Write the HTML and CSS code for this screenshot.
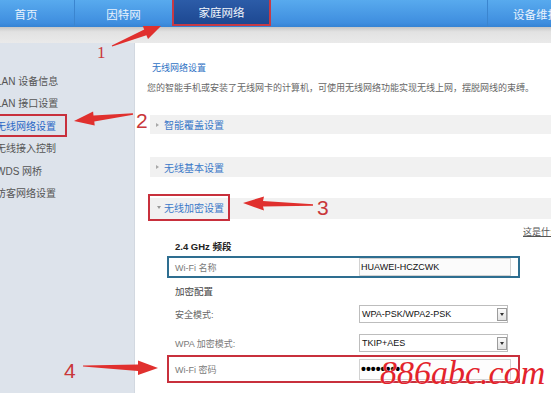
FILE: index.html
```html
<!DOCTYPE html>
<html lang="zh-CN">
<head>
<meta charset="utf-8">
<title>家庭网络 - 无线网络设置</title>
<link rel="stylesheet" href="styles.css">
</head>
<body>
<div class="page">
  <nav class="topnav">
    <div class="tab tab-first">首页</div>
    <div class="tab">因特网</div>
    <div class="tab tab-active">家庭网络</div>
    <div class="tab-spacer"></div>
    <div class="tab tab-last">设备维护</div>
  </nav>
  <div class="shade"></div>
  <div class="body-row">
    <aside class="sidebar">
      <div class="side-item">LAN 设备信息</div>
      <div class="side-item">LAN 接口设置</div>
      <div class="side-item active">无线网络设置</div>
      <div class="side-item">无线接入控制</div>
      <div class="side-item">WDS 网桥</div>
      <div class="side-item">访客网络设置</div>
    </aside>
    <main class="main">
      <div class="page-title">无线网络设置</div>
      <p class="desc">您的智能手机或安装了无线网卡的计算机，可使用无线网络功能实现无线上网，摆脱网线的束缚。</p>
      <div class="section s1"><span class="tri-right"></span>智能覆盖设置</div>
      <div class="section s2"><span class="tri-right"></span>无线基本设置</div>
      <div class="section s3"><div class="sec-box"><span class="tri-down"></span>无线加密设置</div></div>
      <div class="help">这是什么?</div>
      <div class="form">
        <div class="band-title">2.4 GHz 频段</div>
        <div class="row row-name">
          <div class="row-label">Wi-Fi 名称</div>
          <div class="input">HUAWEI-HCZCWK</div>
        </div>
        <div class="group-title">加密配置</div>
        <div class="row row-mode">
          <div class="row-label dark">安全模式:</div>
          <div class="select"><span>WPA-PSK/WPA2-PSK</span><span class="select-btn"><span class="tri-sel"></span></span></div>
        </div>
        <div class="row row-wpa">
          <div class="row-label">WPA 加密模式:</div>
          <div class="select"><span>TKIP+AES</span><span class="select-btn"><span class="tri-sel"></span></span></div>
        </div>
        <div class="row row-pass">
          <div class="row-label">Wi-Fi 密码</div>
          <div class="input input-pass">••••••••</div>
        </div>
      </div>
    </main>
  </div>
  <svg class="annot" viewBox="0 0 551 393" width="551" height="393">
    <g class="arrows">
      <polygon points="111.8,45.4 144.2,29.6 142.7,25.9 161,26 148,38.9 146.4,35.2 112.2,46.6"/>
      <polygon points="132.9,113.3 93.5,115.6 93.1,111.6 74,121 94.7,125.6 94.3,121.6 133.1,114.7"/>
      <polygon points="313,204.3 263,201 264,196.5 243,203 264,210.5 263,206.5 313,205.7"/>
      <polygon points="83,365.5 138,364.5 138,360.5 158,368 138,375 138,371 83,366.5"/>
    </g>
    <text class="num num-serif" x="97" y="58">1</text>
    <text class="num" x="136" y="128">2</text>
    <text class="num" x="317" y="215">3</text>
    <text class="num" x="64" y="378">4</text>
  </svg>
  <div class="watermark">886abc.com</div>
</div>
</body>
</html>
```

FILE: styles.css
```css
html, body {
  margin: 0;
  padding: 0;
  background: #fff;
}
body {
  font-family: "Liberation Sans", "Noto Sans CJK SC", sans-serif;
}
.page {
  position: relative;
  width: 551px;
  height: 393px;
  overflow: hidden;
}

/* top navigation */
.topnav {
  display: flex;
  height: 27px;
  margin-left: -22px;
  margin-right: -33px;
  background: linear-gradient(#58aaee, #3f8edf 85%, #3583d4);
}
.tab {
  flex: none;
  width: 97px;
  display: flex;
  align-items: center;
  justify-content: center;
  color: #e9f3fd;
  font-size: 11.5px;
  box-sizing: border-box;
}
.tab-first {
  border-right: 1px solid #3b85cf;
}
.tab-active {
  width: 99px;
  height: 26px;
  background: linear-gradient(#2c5ca8, #1d4892);
  border: 2px solid #c63a46;
  border-top: none;
  color: #f4f7fc;
}
.tab-spacer {
  flex: 1;
}
.tab-last {
  border-left: 1px solid #3b85cf;
}

.shade {
  height: 16px;
  background: linear-gradient(#c6c6c6, #e2e2e2 30%, #eaeaea);
}

.body-row {
  display: flex;
  height: 350px;
}

/* sidebar */
.sidebar {
  flex: none;
  width: 134px;
  background: #dde3eb;
  border-right: 1px solid #d2d8e0;
  padding-top: 26px;
  overflow: hidden;
}
.side-item {
  height: 22.5px;
  display: flex;
  align-items: center;
  margin-left: -4px;
  font-size: 10px;
  color: #555;
  white-space: nowrap;
}
.side-item.active {
  box-sizing: border-box;
  width: 73px;
  margin-left: -6px;
  border: 2px solid #c8303c;
  color: #2b67c6;
}

/* main */
.main {
  flex: 1;
  padding-left: 15px;
  overflow: hidden;
}
.page-title {
  margin: 17px 0 0 2px;
  line-height: 16px;
  font-size: 9px;
  color: #2f72c4;
}
.desc {
  margin: 4px 0 0 -3px;
  line-height: 16px;
  font-size: 9px;
  color: #666;
  white-space: nowrap;
}
.section {
  display: flex;
  align-items: center;
  padding-left: 6px;
  background: #f1f1f1;
  font-size: 10px;
  color: #3a78c8;
  white-space: nowrap;
}
.s1 { margin-top: 19px; height: 19px; }
.s2 { margin-top: 23px; height: 20px; }
.s3 { margin-top: 21px; height: 21px; align-items: flex-start; }
.sec-box {
  box-sizing: border-box;
  width: 82px;
  height: 27px;
  margin: -4px 0 0 -8px;
  padding-left: 7px;
  border: 2px solid #c8303c;
  display: flex;
  align-items: center;
}
.tri-right {
  width: 0;
  height: 0;
  border-left: 3px solid #a8a8a8;
  border-top: 2.5px solid transparent;
  border-bottom: 2.5px solid transparent;
  margin-right: 5px;
}
.tri-down {
  width: 0;
  height: 0;
  border-top: 3px solid #999;
  border-left: 2.5px solid transparent;
  border-right: 2.5px solid transparent;
  margin-right: 3px;
}
.help {
  margin: 6px 0 0 373px;
  line-height: 14px;
  font-size: 9px;
  color: #555;
  text-decoration: underline;
  white-space: nowrap;
}

/* form */
.form {
  margin-left: 17px;
  width: 353px;
}
.band-title {
  line-height: 16px;
  padding-left: 8px;
  font-size: 9.5px;
  font-weight: bold;
  color: #222;
}
.group-title {
  margin-top: 6px;
  line-height: 16px;
  padding-left: 8px;
  font-size: 9.5px;
  color: #444;
}
.row {
  display: flex;
  align-items: center;
  height: 22px;
  box-sizing: border-box;
  border: 2px solid transparent;
}
.row-label {
  flex: none;
  width: 190px;
  box-sizing: border-box;
  padding-left: 6px;
  font-size: 9px;
  color: #7a7a7a;
  white-space: nowrap;
}
.row-label.dark {
  color: #666;
}
.row-name {
  margin-top: 1px;
  border-color: #2e6e90;
}
.row-mode { margin-top: 3px; }
.row-wpa { margin-top: 7px; }
.row-pass {
  margin-top: 1px;
  height: 28px;
  border-color: #c8303c;
}
.input {
  box-sizing: border-box;
  width: 152px;
  height: 18px;
  border: 1px solid #d2d2d2;
  background: #fbfbfb;
  padding-left: 1px;
  display: flex;
  align-items: center;
  font-size: 9px;
  color: #111;
}
.input-pass {
  height: 21px;
  font-size: 14px;
  font-weight: bold;
  color: #000;
  background: #fdfdfd;
}
.select {
  box-sizing: border-box;
  width: 149px;
  height: 18px;
  border: 1px solid #bdbdbd;
  background: #fff;
  padding: 0 0 0 2px;
  display: flex;
  align-items: center;
  justify-content: space-between;
  font-size: 9px;
  color: #111;
}
.select-btn {
  box-sizing: border-box;
  width: 10px;
  height: 13px;
  border: 1px solid #9c9c9c;
  background: linear-gradient(#fbfbfb, #e2e2e2);
  display: flex;
  align-items: center;
  justify-content: center;
}
.tri-sel {
  width: 0;
  height: 0;
  border-top: 3px solid #333;
  border-left: 2.5px solid transparent;
  border-right: 2.5px solid transparent;
}

/* annotations overlay */
.annot {
  position: absolute;
  left: 0;
  top: 0;
  pointer-events: none;
}
.arrows {
  fill: #e0302e;
}
.num {
  fill: #c9373a;
  font-family: "Liberation Sans", sans-serif;
  font-size: 21px;
}
.num-serif {
  font-family: "Liberation Serif", serif;
  font-size: 17px;
}
.watermark {
  position: absolute;
  left: 380px;
  top: 356px;
  font-family: "Liberation Serif", serif;
  font-style: italic;
  font-size: 34px;
  line-height: 34px;
  color: #e3232c;
  white-space: nowrap;
  text-shadow: 0 0 1px #fff;
}
```
